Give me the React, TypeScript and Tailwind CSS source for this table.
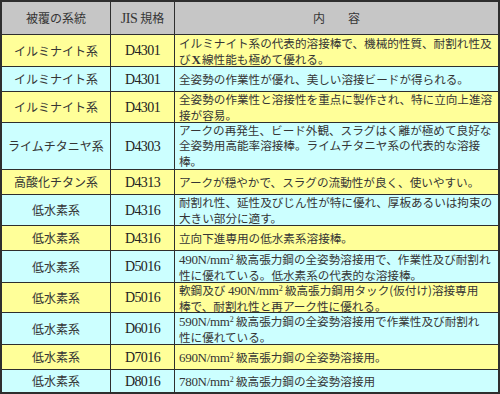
import React from "react";

const JP = "font-['Noto_Sans_CJK_JP','Noto_Sans',sans-serif]";
const SERIF = "font-['Liberation_Serif',serif]";

type Row = { kind: string; code: string; lines: React.ReactNode[]; color: "y" | "c"; tight?: boolean };

const N = ({ t }: { t: string }) => (
  <span className={`${SERIF} text-[13px] tracking-[-0.3px] leading-none`}>
    {t}N/mm<span className="relative -top-[4px] text-[8px] leading-none">2</span>
  </span>
);

const rows: Row[] = [
  {
    kind: "イルミナイト系",
    code: "D4301",
    color: "y",
    lines: [
      "イルミナイト系の代表的溶接棒で、機械的性質、耐割れ性及",
      <>
        び<span className={`${SERIF} font-bold text-[13px] mx-[1px] leading-none`}>X</span>線性能も極めて優れる。
      </>,
    ],
  },
  { kind: "イルミナイト系", code: "D4301", color: "c", lines: ["全姿勢の作業性が優れ、美しい溶接ビードが得られる。"] },
  {
    kind: "イルミナイト系",
    code: "D4301",
    color: "y",
    lines: ["全姿勢の作業性と溶接性を重点に製作され、特に立向上進溶", "接が容易。"],
  },
  {
    kind: "ライムチタニヤ系",
    code: "D4303",
    color: "c",
    tight: true,
    lines: [
      "アークの再発生、ビード外観、スラグはく離が極めて良好な",
      "全姿勢用高能率溶接棒。ライムチタニヤ系の代表的な溶接",
      "棒。",
    ],
  },
  { kind: "高酸化チタン系", code: "D4313", color: "y", lines: ["アークが穏やかで、スラグの流動性が良く、使いやすい。"] },
  {
    kind: "低水素系",
    code: "D4316",
    color: "c",
    lines: ["耐割れ性、延性及びじん性が特に優れ、厚板あるいは拘束の", "大きい部分に適す。"],
  },
  { kind: "低水素系", code: "D4316", color: "y", lines: ["立向下進専用の低水素系溶接棒。"] },
  {
    kind: "低水素系",
    code: "D5016",
    color: "c",
    lines: [
      <>
        <N t="490" /> 級高張力鋼の全姿勢溶接用で、作業性及び耐割れ
      </>,
      "性に優れている。低水素系の代表的な溶接棒。",
    ],
  },
  {
    kind: "低水素系",
    code: "D5016",
    color: "y",
    lines: [
      <>
        軟鋼及び <N t="490" /> 級高張力鋼用タック(仮付け)溶接専用
      </>,
      "棒で、耐割れ性と再アーク性に優れる。",
    ],
  },
  {
    kind: "低水素系",
    code: "D6016",
    color: "c",
    lines: [
      <>
        <N t="590" /> 級高張力鋼の全姿勢溶接用で作業性及び耐割れ
      </>,
      "性に優れている。",
    ],
  },
  {
    kind: "低水素系",
    code: "D7016",
    color: "y",
    lines: [
      <>
        <N t="690" /> 級高張力鋼の全姿勢溶接用。
      </>,
    ],
  },
  {
    kind: "低水素系",
    code: "D8016",
    color: "c",
    lines: [
      <>
        <N t="780" /> 級高張力鋼の全姿勢溶接用
      </>,
    ],
  },
];

export default function App() {
  return (
    <div className="w-[500px] h-[394px] bg-white">
      <div
        className={`w-[500px] h-[394px] border-2 border-[#2e2e2e] grid grid-cols-[109px_64px_1fr] grid-rows-[33px_32px_25px_31px_47px_25px_31px_25px_32px_30px_32px_25px_22px] text-[#353535] text-[12px] ${JP}`}
      >
        <div className="bg-[#c6c6c6] border-r border-b border-[#2e2e2e] flex items-center justify-center">
          被覆の系統
        </div>
        <div className="bg-[#c6c6c6] border-r border-b border-[#2e2e2e] flex items-center justify-center">
          <span className={`${SERIF} text-[14px] tracking-[-0.5px] mr-[3px]`}>JIS</span>規格
        </div>
        <div className="bg-[#c6c6c6] border-b border-[#2e2e2e] flex items-center justify-center">
          内<span className="inline-block w-[23px]" />容
        </div>
        {rows.map((r, i) => {
          const last = i === rows.length - 1;
          const bg = r.color === "y" ? "bg-[#ffff99]" : "bg-[#ccffff]";
          const bb = last ? "" : "border-b";
          return (
            <React.Fragment key={i}>
              <div className={`${bg} ${bb} border-r border-[#2e2e2e] flex items-center justify-center`}>{r.kind}</div>
              <div className={`${bg} ${bb} border-r border-[#2e2e2e] flex items-center justify-center`}>
                <span className={`${SERIF} text-[14px] tracking-[-0.6px] text-[#222]`}>{r.code}</span>
              </div>
              <div
                className={`${bg} ${bb} border-[#2e2e2e] flex flex-col justify-center pl-[4px] whitespace-nowrap text-[11.6px] ${
                  r.tight ? "leading-[15.5px]" : "leading-[16px]"
                }`}
              >
                {r.lines.map((l, j) => (
                  <div key={j}>{l}</div>
                ))}
              </div>
            </React.Fragment>
          );
        })}
      </div>
    </div>
  );
}
